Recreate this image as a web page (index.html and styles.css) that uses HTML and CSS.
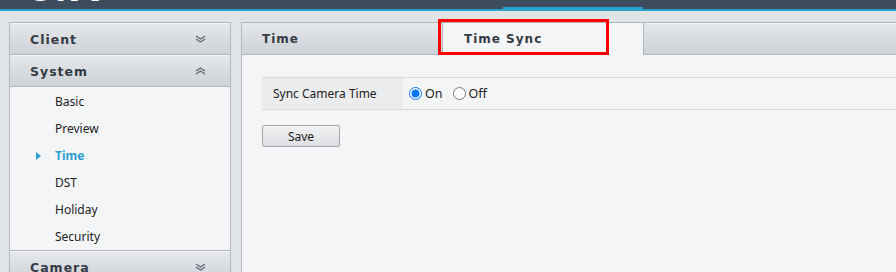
FILE: index.html
```html
<!DOCTYPE html>
<html lang="en">
  <head>
    <meta charset="UTF-8" />
    <meta name="viewport" content="width=device-width, initial-scale=1.0" />
    <title>Setup - Time</title>
    <link rel="stylesheet" href="styles.css">
  </head>
  <body>
    <div class="topbar">
      <div class="logo">UNV</div>
      <div class="nav-item active"></div>
    </div>
    <div class="topline"></div>

    <div class="page">
      <div class="sidebar">
        <div class="section-head">
          <span>Client</span>
          <svg class="chevron" width="11" height="8" viewBox="0 0 11 8">
            <path d="M1 1l4.5 3 4.5-3M1 4l4.5 3 4.5-3" fill="none" stroke="#5d6b7b" stroke-width="1.4" />
          </svg>
        </div>
        <div class="section-head">
          <span>System</span>
          <svg class="chevron" width="11" height="8" viewBox="0 0 11 8">
            <path d="M1 4l4.5-3 4.5 3M1 7l4.5-3 4.5 3" fill="none" stroke="#5d6b7b" stroke-width="1.4" />
          </svg>
        </div>
        <ul class="menu">
          <li>Basic</li>
          <li>Preview</li>
          <li class="current">Time</li>
          <li>DST</li>
          <li>Holiday</li>
          <li>Security</li>
        </ul>
        <div class="section-head last">
          <span>Camera</span>
          <svg class="chevron" width="11" height="8" viewBox="0 0 11 8">
            <path d="M1 1l4.5 3 4.5-3M1 4l4.5 3 4.5-3" fill="none" stroke="#5d6b7b" stroke-width="1.4" />
          </svg>
        </div>
      </div>

      <div class="main">
        <div class="tabs">
          <div class="tab">Time</div>
          <div class="tab selected">
            Time Sync
            <div class="highlight"></div>
          </div>
          <div class="tab-rest"></div>
        </div>

        <div class="content">
          <div class="form-row">
            <div class="form-label">Sync Camera Time</div>
            <div class="form-value">
              <label class="radio"><input type="radio" name="sync" checked />On</label>
              <label class="radio"><input type="radio" name="sync" />Off</label>
            </div>
          </div>
          <button class="save-button">Save</button>
        </div>
      </div>
    </div>
  </body>
</html>
```

FILE: styles.css
```css
* {
  margin: 0;
  padding: 0;
  box-sizing: border-box;
}

body {
  font-family: "Noto Sans", "Open Sans", sans-serif;
  font-size: 12px;
  color: #222;
  background: #e1e4e7;
  height: 272px;
  overflow: hidden;
}

.topbar {
  height: 9px;
  background: #3e4d5e;
  display: flex;
  padding-left: 28px;
  overflow: hidden;
}

.logo {
  width: 475px;
  color: #fff;
  font-family: "DejaVu Sans", sans-serif;
  font-weight: bold;
  font-size: 30px;
  line-height: 30px;
  letter-spacing: 3px;
  margin-top: -24px;
}

.nav-item {
  width: 140px;
  height: 9px;
  border-bottom: 2px solid #29a3cc;
}

.topline {
  height: 2px;
  background: #29a3cc;
}

.page {
  display: flex;
  gap: 10px;
  padding: 11px 0 0 9px;
}

.sidebar {
  width: 222px;
  flex-shrink: 0;
  border: 1px solid #b3b6ba;
  border-bottom: none;
  background: #f4f5f7;
}

.section-head {
  height: 32px;
  display: flex;
  align-items: center;
  justify-content: space-between;
  padding: 1px 24px 0 20px;
  background: linear-gradient(#e6e8ea, #cdd2d7);
  border-bottom: 1px solid #b3b6ba;
  box-shadow: inset 0 1px 0 #f3f4f5;
  font-family: "DejaVu Sans", sans-serif;
  font-weight: bold;
  font-size: 12.5px;
  letter-spacing: 1px;
  color: #353b45;
}

.section-head.last {
  border-top: 1px solid #b3b6ba;
  border-bottom: none;
}

.chevron {
  display: block;
}

.menu {
  list-style: none;
  padding: 1px 0 0;
}

.menu li {
  height: 27px;
  line-height: 27px;
  padding-left: 45px;
  position: relative;
}

.menu li.current {
  color: #2a9fcf;
  font-weight: bold;
}

.menu li.current::before {
  content: "";
  position: absolute;
  left: 26px;
  top: 10px;
  border-left: 5px solid #2a9fcf;
  border-top: 4px solid transparent;
  border-bottom: 4px solid transparent;
}

.main {
  flex: 1;
  border-left: 1px solid #b3b6ba;
  border-top: 1px solid #b3b6ba;
  background: #f4f5f7;
}

.tabs {
  display: flex;
  height: 32px;
}

.tab {
  width: 200px;
  padding-left: 20px;
  display: flex;
  align-items: center;
  background: linear-gradient(#e6e8ea, #cdd2d7);
  border-bottom: 1px solid #b3b6ba;
  font-family: "DejaVu Sans", sans-serif;
  font-weight: bold;
  font-size: 12px;
  letter-spacing: 1px;
  color: #353b45;
}

.tab.selected {
  width: 202px;
  padding-left: 21px;
  background: #f4f5f7;
  border-left: 1px solid #b3b6ba;
  border-right: 1px solid #b3b6ba;
  border-bottom: none;
  position: relative;
}

.highlight {
  position: absolute;
  left: -5px;
  top: -4px;
  width: 171px;
  height: 36px;
  border: 3px solid #ff0000;
}

.tab-rest {
  flex: 1;
  background: linear-gradient(#e6e8ea, #cdd2d7);
  border-bottom: 1px solid #b3b6ba;
  box-shadow: inset 0 1px 0 #f3f4f5;
}

.content {
  padding: 22px 0 0 20px;
}

.form-row {
  display: flex;
  height: 33px;
  border-top: 1px solid #d8dadd;
  border-bottom: 1px solid #d8dadd;
}

.form-label {
  width: 141px;
  padding-left: 11px;
  display: flex;
  align-items: center;
  background: #ebecee;
}

.form-value {
  display: flex;
  align-items: center;
  gap: 10px;
  padding-left: 6px;
}

.radio {
  display: flex;
  align-items: center;
  gap: 3px;
  font-size: 12.5px;
}

.radio input {
  width: 13px;
  height: 13px;
  margin: 0;
}

.save-button {
  margin-top: 15px;
  width: 78px;
  height: 22px;
  border: 1px solid #a3a6aa;
  border-radius: 2px;
  background: linear-gradient(#f2f3f4, #dcdee1);
  font-family: "Noto Sans", sans-serif;
  font-size: 12px;
  color: #222;
}
```
